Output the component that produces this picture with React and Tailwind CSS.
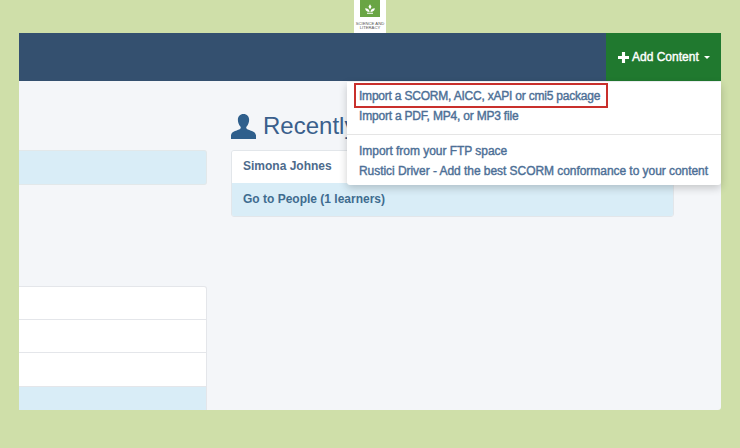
const menuGroups = [
  [
    { label: 'Import a SCORM, AICC, xAPI or cmi5 package', tracking: 'tracking-[-0.21px]' },
    { label: 'Import a PDF, MP4, or MP3 file', tracking: 'tracking-[-0.2px]' },
  ],
  [
    { label: 'Import from your FTP space', tracking: 'tracking-[-0.04px]' },
    { label: 'Rustici Driver - Add the best SCORM conformance to your content', tracking: 'tracking-[-0.05px]' },
  ],
];

function UserIcon() {
  return (
    <svg viewBox="0 0 24 24" className="w-[25px] h-[25px] shrink-0 fill-[#2f5f8c]">
      <path d="M12 0c-3.400 0-5.400 2.400-5.400 5.600 0 2.600 1 5 2.400 6.400.5.5.5 1.400.1 2-.5.7-1.600 1.100-3.200 1.700C3 16.700.6 17.500 0 20.500V24h24v-3.500c-.6-3-3-3.800-5.900-4.800-1.600-.6-2.700-1-3.200-1.700-.4-.6-.4-1.500.1-2 1.400-1.400 2.400-3.800 2.400-6.400C17.400 2.400 15.400 0 12 0z" />
    </svg>
  );
}

function Logo() {
  return (
    <div className="w-[32px] h-[33px] bg-white flex flex-col items-center">
      <div className="w-[20px] h-[17px] bg-[#69a544] flex items-center justify-center">
        <svg viewBox="0 0 16 16" className="w-[12px] h-[12px] fill-white">
          <path d="M8 1.500 10 5 8 8.500 6 5zM1.500 7c3 0 5.500 1 6 5-3.500 0-5.500-1.500-6-5zM14.500 7c-3 0-5.500 1-6 5 3.500 0 5.500-1.500 6-5zM4 13h8v1.200H4z" />
        </svg>
      </div>
      <div className="text-[4.200px] leading-[4px] mt-[5px] text-[#555] text-center whitespace-nowrap">
        SCIENCE AND<br />LITERACY
      </div>
    </div>
  );
}

export default function App() {
  return (
    <div className="w-[740px] h-[448px] bg-[#cfdfa9] overflow-hidden font-['Liberation_Sans',Arial,sans-serif]">
      <div className="flex justify-center">
        <Logo />
      </div>
      <div className="relative mx-[19px] h-[377px] bg-[#f4f6f9] rounded-b-[3px]">
        {/* Top bar */}
        <div className="flex justify-end h-[48px] bg-[#34506f]">
          <button className="w-[115px] bg-[#20792f] text-white text-[12px] [-webkit-text-stroke:0.4px_white] flex items-center pl-[12px]">
            <svg viewBox="0 0 12 12" className="w-[11px] h-[11px] fill-white mr-[3px]">
              <path d="M4.300 0h3.400v4.300H12v3.400H7.700V12H4.300V7.700H0V4.300h4.300z" />
            </svg>
            <span>Add Content</span>
            <span className="ml-[5px] w-0 h-0 border-x-[3px] border-x-transparent border-t-[3px] border-t-white" />
          </button>
        </div>

        <div className="flex h-[329px] overflow-hidden">
          {/* Left column, cut off on the left */}
          <div className="w-[188px] shrink-0 flex flex-col pt-[69px]">
            <div className="h-[35px] shrink-0 bg-[#d9edf7] border border-l-0 border-[#e2e8ea] rounded-r-[3px]" />
            <div className="mt-[101px] shrink-0 bg-white border border-l-0 border-[#e4e6ea] rounded-tr-[3px]">
              <div className="h-[33px] border-b border-[#e4e6ea]" />
              <div className="h-[33px] border-b border-[#e4e6ea]" />
              <div className="h-[33px]" />
              <div className="h-[30px] bg-[#d9edf7] border-t border-[#e4e6ea]" />
            </div>
          </div>

          {/* Right column */}
          <div className="w-[443px] ml-[24px] shrink-0 pt-[30px]">
            <div className="flex items-center gap-[7px] h-[30px]">
              <UserIcon />
              <h2 className="text-[24px] leading-[30px] text-[#3a5f8c] whitespace-nowrap">Recently</h2>
            </div>
            <div className="mt-[9px] border border-[#e2e6ea] rounded-[3px] overflow-hidden">
              <div className="h-[32px] bg-white pl-[11px] pb-[3px] flex items-center text-[12px] font-bold text-[#4d6b8c]">
                Simona Johnes
              </div>
              <div className="h-[33px] bg-[#d9edf7] pl-[11px] pb-[1px] flex items-center text-[12px] font-bold text-[#3f6c8f]">
                Go to People (1 learners)
              </div>
            </div>
          </div>
        </div>

        {/* Dropdown */}
        <div className="absolute left-[328px] right-0 top-[49px] bg-white shadow-[0_3px_8px_rgba(0,0,0,0.2)] rounded-b-[3px] h-[103px] pt-[4px]">
          {menuGroups.map((group, i) => (
            <div key={i} className={i ? 'border-t border-[#e5e5e5] mt-[8px] pt-[6px]' : ''}>
              {group.map(item => (
                <div key={item.label} className={`h-[20px] pl-[12px] text-[12px] leading-[20px] text-[#4d6f96] [-webkit-text-stroke:0.4px_#4d6f96] whitespace-nowrap ${item.tracking}`}>
                  {item.label}
                </div>
              ))}
            </div>
          ))}
          <div className="absolute left-[7px] top-[1px] w-[254px] h-[25px] border-2 border-[#c9302c]" />
        </div>
      </div>
    </div>
  );
}
